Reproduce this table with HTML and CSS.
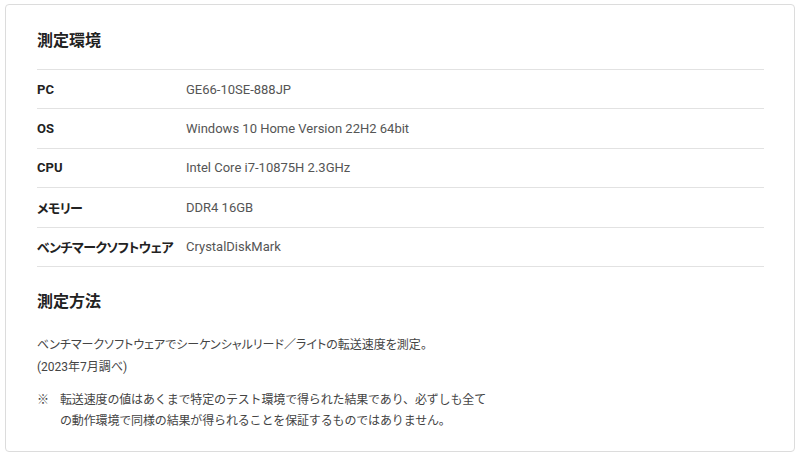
FILE: index.html
```html
<!DOCTYPE html>
<html lang="ja">
<head>
<meta charset="utf-8">
<link rel="stylesheet" href="styles.css">
</head>
<body>
<section class="card">
  <h2 class="heading">測定環境</h2>
  <div class="spec">
    <div class="row"><div class="label">PC</div><div class="value">GE66-10SE-888JP</div></div>
    <div class="row"><div class="label">OS</div><div class="value">Windows 10 Home Version 22H2 64bit</div></div>
    <div class="row"><div class="label">CPU</div><div class="value">Intel Core i7-10875H 2.3GHz</div></div>
    <div class="row"><div class="label label-ja">メモリー</div><div class="value">DDR4 16GB</div></div>
    <div class="row"><div class="label label-ja">ベンチマークソフトウェア</div><div class="value">CrystalDiskMark</div></div>
  </div>
  <h2 class="heading heading-method">測定方法</h2>
  <p class="method">ベンチマークソフトウェアでシーケンシャルリード／ライトの転送速度を測定。<br>(2023年7月調べ)</p>
  <div class="note"><span class="mark">※</span><p class="note-text">転送速度の値はあくまで特定のテスト環境で得られた結果であり、必ずしも全て<br>の動作環境で同様の結果が得られることを保証するものではありません。</p></div>
</section>
</body>
</html>
```
FILE: styles.css
```css
html, body {
  margin: 0;
  padding: 0;
  background: #fff;
}
body {
  padding: 4px 5px 7px 5px;
  font-family: Roboto, "Noto Sans CJK JP", sans-serif;
  color: #333;
}
.card {
  border: 1px solid #dcdcdc;
  border-radius: 4px;
  padding: 24px 30px 20px 31px;
  box-sizing: border-box;
  height: 448px;
}
.heading {
  margin: 0;
  font-size: 16px;
  line-height: 24px;
  font-weight: 700;
  color: #222;
}
.spec {
  margin-top: 16px;
  border-top: 1px solid #e2e2e2;
}
.row {
  display: grid;
  grid-template-columns: 149px 1fr;
  align-items: center;
  height: 38.4px;
  border-bottom: 1px solid #e2e2e2;
  font-size: 13px;
}
.label {
  font-weight: 700;
  color: #222;
  white-space: nowrap;
}
.label-ja {
  font-feature-settings: "palt";
  letter-spacing: -0.6px;
}
.value {
  color: #555;
}
.heading-method {
  margin-top: 23px;
}
.method {
  margin: 20px 0 0;
  font-size: 12px;
  line-height: 22px;
  color: #444;
  font-feature-settings: "palt";
}
.note {
  display: flex;
  margin-top: 12px;
  font-size: 12px;
  line-height: 21px;
  color: #444;
}
.mark {
  width: 23px;
  flex: none;
}
.note-text {
  margin: 0;
  letter-spacing: -0.15px;
}
```
